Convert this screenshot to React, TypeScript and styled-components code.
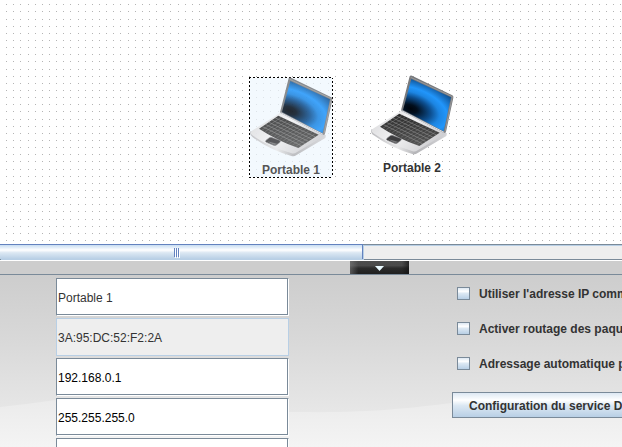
import React, { useId, useState } from "react";
import styled, { createGlobalStyle } from "styled-components";

const GlobalStyle = createGlobalStyle`
  *, *::before, *::after { box-sizing: border-box; }
  html, body { margin: 0; height: 100%; overflow: hidden; }
  body {
    background: #cdcdcd;
    color: #333;
    font: 12px/16px "Liberation Sans", Arial, sans-serif;
  }
`;

const Workspace = styled.main`
  display: grid;
  grid-template-rows: minmax(0, 244fr) auto auto minmax(0, 172fr);
  grid-template-columns: minmax(0, 1fr);
  height: 100vh;
`;

const column = (at: number) =>
  `transparent ${at}px, #b4b4b4 ${at}px, #b4b4b4 ${at + 1}px, transparent ${at + 1}px`;
const row = (at: number) =>
  `transparent ${at}px, #000 ${at}px, #000 ${at + 1}px, transparent ${at + 1}px`;
const columns = [6, 13, 20, 28, 35, 42, 49].map(column).join(", ");
const rows = [4, 11, 19, 26, 33, 40, 47].map(row).join(", ");

const Canvas = styled.section`
  position: relative;
  overflow: hidden;
  background: #fff;

  &::before {
    content: "";
    position: absolute;
    inset: 0;
    background: linear-gradient(to right, ${columns}) 0 0 / 50px 50px;
    mask: linear-gradient(to bottom, ${rows}) 0 0 / 50px 50px;
  }
`;

const Device = styled.button<{ $x: number; $y: number; $selected: boolean }>`
  position: absolute;
  left: ${(p) => p.$x}px;
  top: ${(p) => p.$y}px;
  display: flex;
  flex-direction: column;
  align-items: center;
  width: 84px;
  padding: 0;
  border: 1px solid transparent;
  background: ${(p) =>
    p.$selected
      ? `repeating-linear-gradient(90deg, #000 0 2px, #fff 2px 4px) 0 0 / 100% 1px no-repeat border-box,
         repeating-linear-gradient(90deg, #000 0 2px, #fff 2px 4px) 0 100% / 100% 1px no-repeat border-box,
         repeating-linear-gradient(#000 0 2px, #fff 2px 4px) 0 0 / 1px 100% no-repeat border-box,
         repeating-linear-gradient(#000 0 2px, #fff 2px 4px) 100% 0 / 1px 100% no-repeat border-box,
         rgba(238, 246, 253, 0.7)`
      : "none"};
  color: ${(p) => (p.$selected ? "#555" : "#333")};
  font: bold 12px/14px "Liberation Sans", Arial, sans-serif;

  svg {
    display: block;
    overflow: visible;
    margin-bottom: 5px;
    opacity: ${(p) => (p.$selected ? 0.85 : 1)};
  }
`;

const ScrollTrack = styled.div`
  height: 16px;
  border-top: 1px solid #7a8a99;
  border-bottom: 1px solid #7a8a99;
  background: linear-gradient(#b8cfe5 0 1px, #eee 1px);
`;

const ScrollThumb = styled.div`
  display: flex;
  align-items: center;
  justify-content: center;
  gap: 1px;
  width: 58.4%;
  height: 15px;
  margin-top: -1px;
  padding-right: 9px;
  border-top: 1px solid #6382bf;
  border-right: 1px solid #6382bf;
  background: linear-gradient(#c8ddf2 0, #fff 36%, #dce8f3 55%, #b8cfe5 100%);
  box-shadow: 1px 1px 0 #b8cfe5;
`;

const Grip = styled.span`
  width: 1px;
  height: 9px;
  background: #6382bf;
  box-shadow: 1px 1px 0 #fff;
`;

const Divider = styled.div`
  display: flex;
  height: 15px;
  padding-left: 350px;
  border-top: 1px solid #fff;
  border-bottom: 1px solid #7a8a99;
  background: #cdcdcd;
`;

const Collapse = styled.button`
  display: flex;
  align-items: center;
  justify-content: center;
  width: 59px;
  padding: 2px 0 0;
  border: 0;
  background:
    linear-gradient(90deg, #8a8a8a80 0, #6660 14%, #0000 88%, #111a 100%),
    linear-gradient(#4c4c4c 0, #4a4a4a 35%, #2b2b2b 55%, #202020 100%);
`;

const Settings = styled.section`
  position: relative;
  display: grid;
  grid-template-columns: 233px minmax(0, 1fr);
  align-items: start;
  gap: 163px;
  padding: 3px 0 0 56px;
  overflow: hidden;
`;

const Backdrop = styled.svg`
  position: absolute;
  inset: 0;
  width: 100%;
  height: 100%;
`;

const Fields = styled.div`
  position: relative;
  display: flex;
  flex-direction: column;
  gap: 2px;
`;

const TextField = styled.input<{ $muted?: boolean }>`
  width: 100%;
  height: 38px;
  padding: 2px 1px 0;
  border: 1px solid #7a8a99;
  border-right-color: #fff;
  border-bottom-color: #fff;
  border-radius: 0;
  outline: 0;
  background: #fff;
  box-shadow: inset -1px -1px 0 #7a8a99;
  color: ${(p) => (p.$muted ? "#333" : "#000")};
  font: 12px/16px "Liberation Sans", Arial, sans-serif;

  &:disabled {
    border-color: #b8cfe5;
    background: #eee;
    box-shadow: none;
    color: #333;
  }
`;

const Options = styled.div`
  position: relative;
  display: flex;
  flex-direction: column;
  align-items: flex-start;
  gap: 19px;
  padding-top: 8px;
  white-space: nowrap;
  font-weight: bold;
`;

const Option = styled.label`
  display: flex;
  align-items: center;
  gap: 9px;
  padding-left: 5px;
`;

const Checkbox = styled.input`
  appearance: none;
  width: 13px;
  height: 13px;
  margin: 0 0 1px;
  border: 1px solid #7a8a99;
  background: linear-gradient(#dde8f3 0, #fff 30%, #dce8f3 50%, #b8cfe5 100%);

  &:checked { box-shadow: inset 0 0 0 3px #6382bf; }
`;

const ActionButton = styled.button`
  height: 26px;
  margin-top: 1px;
  padding: 2px 16px 0;
  border: 1px solid #7a8a99;
  background: linear-gradient(#dde8f3 0, #fff 30%, #dce8f3 52%, #b8cfe5 100%);
  color: #333;
  font: bold 12px/16px "Liberation Sans", Arial, sans-serif;
  white-space: nowrap;
`;

function Laptop() {
  const id = useId();
  const keyRows = [1, 2, 3, 4, 5];
  const keyColumns = Array.from({ length: 12 }, (_, i) => i + 1);
  return (
    <svg width="82" height="80" viewBox="30 30 246 240" aria-hidden="true">
      <defs>
        <radialGradient id={`${id}s`} gradientUnits="userSpaceOnUse" cx="0" cy="0" r="1"
          gradientTransform="translate(148 128) rotate(18) scale(180 98)">
          <stop offset="0" stopColor="#00050c" />
          <stop offset="0.12" stopColor="#020f1e" />
          <stop offset="0.35" stopColor="#0d4f90" />
          <stop offset="0.5" stopColor="#1c85e2" />
          <stop offset="0.64" stopColor="#2196fb" />
          <stop offset="0.82" stopColor="#1568b6" />
          <stop offset="1" stopColor="#09396a" />
        </radialGradient>
        <linearGradient id={`${id}b`} x1="0" y1="0" x2="1" y2="0.5">
          <stop offset="0" stopColor="#d6d6d8" />
          <stop offset="0.5" stopColor="#f3f3f4" />
          <stop offset="1" stopColor="#cfcfd2" />
        </linearGradient>
        <linearGradient id={`${id}e`} x1="0" y1="0" x2="1" y2="0">
          <stop offset="0" stopColor="#bcbcbf" />
          <stop offset="0.35" stopColor="#e9e9ea" />
          <stop offset="0.58" stopColor="#b5b5b8" />
          <stop offset="1" stopColor="#d5d5d8" />
        </linearGradient>
        <linearGradient id={`${id}k`} x1="0" y1="0" x2="0" y2="1">
          <stop offset="0" stopColor="#2a2a2a" />
          <stop offset="1" stopColor="#555" />
        </linearGradient>
      </defs>
      <path d="M31 190Q28 202 38 208Q90 246 154 264Q162 267 170 261L256 210L258 202Z" fill={`url(#${id}e)`} />
      <path d="M116 137L122 133L249 198L257 202L170 253Q162 259 153 255Q82 234 36 201Q27 193 38 187Z"
        fill={`url(#${id}b)`} />
      <path d="M115 143L236 200L175 240Q112 218 57 182Z" fill={`url(#${id}k)`} />
      {keyRows.map((k) => (
        <path key={k} d={`M${115 - k * 9.7} ${143 + k * 6.5}L${236 - k * 10.2} ${200 + k * 6.7}`}
          stroke="#9a9a9a" strokeWidth="1.6" />
      ))}
      {keyColumns.map((k) => (
        <path key={k} d={`M${115 + k * 9.3} ${143 + k * 4.4}L${57 + k * 9.1} ${182 + k * 4.5}`}
          stroke="#8c8c8c" strokeWidth="1.2" />
      ))}
      <path d="M94 208L119 217Q123 219 120 223L109 231Q105 234 99 231L79 223Q74 221 78 217L88 209Q91 207 94 208Z"
        fill="#3d3d3f" stroke="#8a8a8c" strokeWidth="2" />
      <path d="M82 220L111 227L105 231L98 229Z" fill="#79797b" />
      <path d="M146 31Q148 27 153 29L274 88Q278 90 277 95L255 197Q253 202 248 200L123 136Q119 134 121 129Z" fill="#77797c" />
      <path d="M149 34L274 92L252 198" fill="none" stroke="#a7a7a9" strokeWidth="2" />
      <path d="M151 39L270 94L248 196L126 132Z" fill={`url(#${id}s)`} />
      <path d="M122 134L249 199" stroke="#d7dbe2" strokeWidth="3" />
    </svg>
  );
}

const devices = [
  { name: "Portable 1", x: 249, y: 77 },
  { name: "Portable 2", x: 370, y: 75 },
];

const options = [
  "Utiliser l'adresse IP comme nom",
  "Activer routage des paquets",
  "Adressage automatique par serveur DHCP",
];

export default function App() {
  const [selected, setSelected] = useState("Portable 1");
  return (
    <>
      <GlobalStyle />
      <Workspace>
        <Canvas>
          {devices.map((d) => (
            <Device key={d.name} $x={d.x} $y={d.y} $selected={selected === d.name}
              onClick={() => setSelected(d.name)}>
              <Laptop />
              {d.name}
            </Device>
          ))}
        </Canvas>
        <ScrollTrack>
          <ScrollThumb><Grip /><Grip /><Grip /></ScrollThumb>
        </ScrollTrack>
        <Divider>
          <Collapse aria-label="Masquer">
            <svg width="9" height="5" viewBox="0 0 9 5" aria-hidden="true">
              <path d="M0 0H9L4.5 5Z" fill="#eafaff" />
            </svg>
          </Collapse>
        </Divider>
        <Settings>
          <Backdrop viewBox="0 0 622 172" preserveAspectRatio="none" aria-hidden="true">
            <defs>
              <linearGradient id="shade" x1="0" y1="0" x2="0" y2="1">
                <stop offset="0" stopColor="#cdcdcd" />
                <stop offset="0.4" stopColor="#d9d9d9" />
                <stop offset="0.8" stopColor="#e7e7e7" />
              </linearGradient>
              <linearGradient id="wave" gradientUnits="userSpaceOnUse" x1="0" y1="125" x2="0" y2="172">
                <stop offset="0" stopColor="#ebebeb" />
                <stop offset="1" stopColor="#f4f4f4" />
              </linearGradient>
            </defs>
            <rect width="622" height="172" fill="url(#shade)" />
            <path d="M0 132Q28 129 56 125C130 116 190 137 300 137C370 138 410 133 452 128C510 120 570 118 622 126V172H0Z"
              fill="url(#wave)" />
          </Backdrop>
          <Fields>
            <TextField aria-label="Nom" defaultValue="Portable 1" $muted />
            <TextField aria-label="Adresse MAC" defaultValue="3A:95:DC:52:F2:2A" disabled />
            <TextField aria-label="Adresse IP" defaultValue="192.168.0.1" />
            <TextField aria-label="Masque" defaultValue="255.255.255.0" />
            <TextField aria-label="Passerelle" />
          </Fields>
          <Options>
            {options.map((o) => (
              <Option key={o}><Checkbox type="checkbox" />{o}</Option>
            ))}
            <ActionButton>Configuration du service DHCP</ActionButton>
          </Options>
        </Settings>
      </Workspace>
    </>
  );
}
